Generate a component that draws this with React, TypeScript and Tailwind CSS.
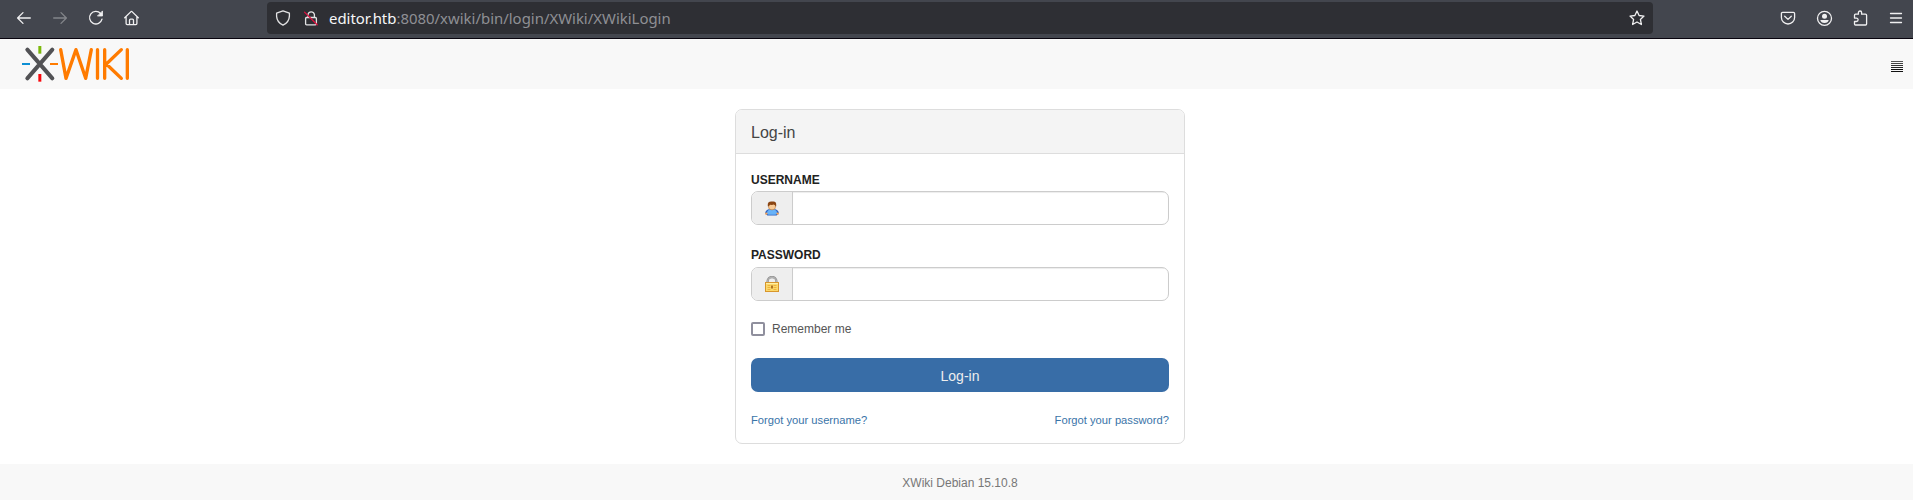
import type { ReactNode } from 'react';

function Glyph({ children, className = '' }: { children: ReactNode; className?: string }) {
  return (
    <svg
      viewBox="0 0 16 16"
      className={`block size-4 shrink-0 overflow-visible ${className}`}
      fill="none"
      stroke="currentColor"
      strokeWidth="1.3"
      strokeLinecap="round"
      strokeLinejoin="round"
    >
      {children}
    </svg>
  );
}

function BrowserBar() {
  return (
    <div className="flex h-[39px] shrink-0 items-start border-b border-[#08040e] bg-[#43464e] pt-[2px] text-[#f0f0f1]">
      <div className="flex h-8 w-[267px] shrink-0 items-center gap-5 pl-4">
        <Glyph>
          <path d="M14.3 8H1.8M7 2.6L1.6 8L7 13.4" />
        </Glyph>
        <Glyph className="text-[#83858a]">
          <path d="M1.7 8H14.2M9 2.6L14.4 8L9 13.4" />
        </Glyph>
        <Glyph>
          <path d="M14 9.2A6.300 6.300 0 1 1 12.600 3.500" />
          <path d="M14.500 1.300V6H9.800Z" fill="currentColor" strokeWidth="0.8" />
        </Glyph>
        <Glyph>
          <path d="M.7 7.800L7 1.600Q7.500 1.200 8 1.600L14.300 7.800M2.100 6.600V13.600Q2.100 14.700 3.200 14.700H11.800Q12.900 14.700 12.900 13.600V6.600M5.500 14.500V10.200Q5.500 9.200 6.500 9.200H8.500Q9.500 9.200 9.500 10.200V14.500" />
        </Glyph>
      </div>
      <div className="flex h-8 w-[1386px] shrink-0 items-center rounded-[4px] bg-[#2e2f34] pl-2 pr-2">
        <Glyph className="text-[#e2e2e3]">
          <path d="M8 .9L14.4 3.2V6.4Q14 12.4 8 15.2Q2 12.4 1.6 6.4V3.2Z" />
        </Glyph>
        <Glyph className="ml-3 text-[#e2e2e3]">
          <path d="M5 7.2V4.3A3.3 3.3 0 0 1 11.4 4.3V7.2M3.600 7.500H12.300Q13.400 7.500 13.400 8.600V13.700Q13.400 14.800 12.300 14.800H3.700Q2.600 14.800 2.600 13.700V8.500Q2.600 7.500 3.600 7.500Z" />
          <path d="M1.500 2.100L14.200 14.800" stroke="#e0103f" />
        </Glyph>
        <span className="ml-[10px] whitespace-nowrap font-['Noto_Sans',sans-serif] text-[14.93px] leading-8 text-[#8f9094]">
          <span className="text-[#f7f7f8]">editor.htb</span>:8080/xwiki/bin/login/XWiki/XWikiLogin
        </span>
        <Glyph className="ml-auto">
          <path d="M8 1L10.1 5.5L15 6.1L11.4 9.4L12.4 14.5L8 12L3.6 14.5L4.6 9.4L1 6.1L5.9 5.5Z" />
        </Glyph>
      </div>
      <div className="ml-auto flex h-8 items-center gap-5 pr-[9px]">
        <Glyph>
          <path d="M2.6 2.4H13.4Q14.6 2.4 14.6 3.6V7.4A6.6 6.6 0 0 1 1.4 7.4V3.6Q1.4 2.4 2.6 2.4ZM4.7 6.2L8 9.4L11.3 6.2" />
        </Glyph>
        <Glyph>
          <circle cx="8.500" cy="8.300" r="7" />
          <circle cx="8.500" cy="6.200" r="2.500" fill="currentColor" stroke="none" />
          <path d="M4.300 9.900H12.700Q12.100 12.900 8.500 12.900Q4.900 12.900 4.300 9.900Z" fill="currentColor" stroke="none" />
        </Glyph>
        <Glyph>
          <path d="M6.400 4.200V2.600A1.600 1.600 0 0 1 9.600 2.600V4.200H13.500Q14.600 4.200 14.600 5.200V14Q14.600 15 13.600 15H3.500Q2.500 15 2.500 14V11.500H4.400A1.700 1.700 0 0 0 4.400 8.100H2.500V5.200Q2.500 4.200 3.500 4.200Z" />
        </Glyph>
        <Glyph>
          <path d="M2.500 3.500H13.500M2.500 8H13.500M2.500 12.500H13.500" />
        </Glyph>
      </div>
    </div>
  );
}

function Logo() {
  return (
    <svg viewBox="60 135 330 114" className="block h-[38px] w-[110px]" fill="none" strokeLinecap="round" strokeLinejoin="round">
      <path d="M82 149L157 235M157 149L82 235" stroke="#525255" strokeWidth="12" />
      <g strokeLinecap="butt">
        <path d="M119.5 138V161" stroke="#7cb90c" strokeWidth="9" />
        <path d="M119.5 222V245" stroke="#f8080d" strokeWidth="9" />
        <path d="M66 192H90" stroke="#0d8fd4" strokeWidth="6" />
        <path d="M150 192H174" stroke="#ff7b00" strokeWidth="6" />
      </g>
      <path
        d="M182 149L198 235L228 149L257 235L274 149M292.500 149V235M314 149V235M364 149L319 192L364 235M382 149V235"
        stroke="#ff7b00"
        strokeWidth="10"
      />
    </svg>
  );
}

function UserIcon() {
  return (
    <svg viewBox="0 -0.6 16 16" className="block size-4">
      <path d="M1.200 13.200Q1 10 4.500 8.600H11.500Q15 10 14.800 13.200L12.600 15H3.400Z" fill="#2a62c4" />
      <path d="M2.800 12.800Q2.800 10 5.500 8.800H10.500Q13.200 10 13.200 12.800L11.500 14.200H4.500Z" fill="#67b2f8" />
      <circle cx="2.300" cy="13" r="1.200" fill="#f3a35c" />
      <circle cx="13.700" cy="13" r="1.200" fill="#f3a35c" />
      <rect x="4.600" y="2.500" width="6.800" height="6.600" rx="2.600" fill="#f8cb98" stroke="#b87333" strokeWidth=".6" />
      <path d="M3.800 5.600V3.200Q4.200 1 7 1H9.500Q12.200 1.200 12.200 4V5.600H11.200V4.600L9.500 3.900L8 4.500L6 4.200L4.800 5.600Z" fill="#8a4513" />
    </svg>
  );
}

function LockIcon() {
  return (
    <svg viewBox="0 0 16 16" className="block size-4">
      <path d="M3.600 7V5.200A4.400 4.200 0 0 1 12.400 5.200V7" fill="none" stroke="#8c8c8c" strokeWidth="2.300" />
      <path d="M3.700 7V5.200A4.300 4.100 0 0 1 12.300 5.200V7" fill="none" stroke="#c8c8c8" strokeWidth=".9" />
      <rect x="1.500" y="6.500" width="13" height="9" fill="#fbd96c" stroke="#d8962c" strokeWidth="1" />
      <path d="M2 7.500H14" stroke="#fff0a6" />
      <path d="M3.500 9.500H6.500M3.500 11.500H6.500M3.500 13.500H6.500M9.500 9.500H12.500M9.500 11.500H12.500M9.500 13.500H12.500" stroke="#efb23c" />
      <path d="M8 9.500V12.500" stroke="#a8691a" strokeWidth="1.800" />
    </svg>
  );
}

function Field({ label, type, icon }: { label: string; type: string; icon: ReactNode }) {
  return (
    <label className="block">
      <span className="block text-[12px] font-bold leading-[17px] text-[#222]">{label}</span>
      <span className="flex h-[34px] overflow-hidden rounded-[7px] border border-[#ccc] bg-white">
        <span className="flex w-[41px] shrink-0 items-center justify-center border-r border-[#ccc] bg-[#eee]">{icon}</span>
        <input type={type} className="min-w-0 flex-1 px-3 shadow-[inset_0_1px_1px_rgba(0,0,0,0.075)] outline-none" />
      </span>
    </label>
  );
}

export default function App() {
  return (
    <div className="flex h-[500px] w-full flex-col overflow-hidden bg-white font-['Liberation_Sans',Arial,sans-serif]">
      <BrowserBar />
      <header className="flex h-[50px] shrink-0 items-start justify-between bg-[#f8f8f8] pl-5 pr-[10px]">
        <div className="pt-[6px]">
          <Logo />
        </div>
        <svg viewBox="0 0 12 11" className="mt-[22px] block h-[11px] w-3" shapeRendering="crispEdges">
          <path d="M0 .5H12" stroke="#555" />
          <path d="M0 2.500H12" stroke="#444" />
          <path d="M0 4.500H12" stroke="#333" />
          <path d="M0 6.500H12" stroke="#222" />
          <path d="M0 8.500H12M0 10.500H12" stroke="#111" />
        </svg>
      </header>
      <main className="flex flex-1 justify-center pl-[7px] pt-5">
        <form className="h-[335px] w-[450px] rounded-[7px] border border-[#ddd] bg-white">
          <h1 className="h-[44px] rounded-t-[6px] border-b border-[#ddd] bg-[#f4f4f4] pl-[15px] text-[16px] leading-[45px] text-[#444]">
            Log-in
          </h1>
          <div className="px-[15px] pt-[18px]">
            <div className="[&_label>span:first-child]:pb-[2px]">
              <Field label="USERNAME" type="text" icon={<UserIcon />} />
            </div>
            <div className="mt-[22px] [&_label>span:first-child]:pb-[3px]">
              <Field label="PASSWORD" type="password" icon={<LockIcon />} />
            </div>
            <label className="mt-[21px] flex h-[14px] items-center">
              <input type="checkbox" className="size-[14px] appearance-none rounded-[2px] border-2 border-[#8f8f9d] bg-white" />
              <span className="ml-[7px] text-[12px] leading-[14px] text-[#555]">Remember me</span>
            </label>
            <button type="button" className="mt-[22px] block h-[34px] w-full rounded-[7px] bg-[#386da7] pt-px text-[14px] leading-[34px] text-[#eee]">
              Log-in
            </button>
            <div className="mt-[20px] flex justify-between text-[11.2px] leading-4 text-[#3a74a8]">
              <a>Forgot your username?</a>
              <a>Forgot your password?</a>
            </div>
          </div>
        </form>
      </main>
      <footer className="h-9 shrink-0 bg-[#f8f8f8] pl-[7px] text-center text-[12px] leading-[38px] text-[#777]">
        XWiki Debian 15.10.8
      </footer>
    </div>
  );
}
